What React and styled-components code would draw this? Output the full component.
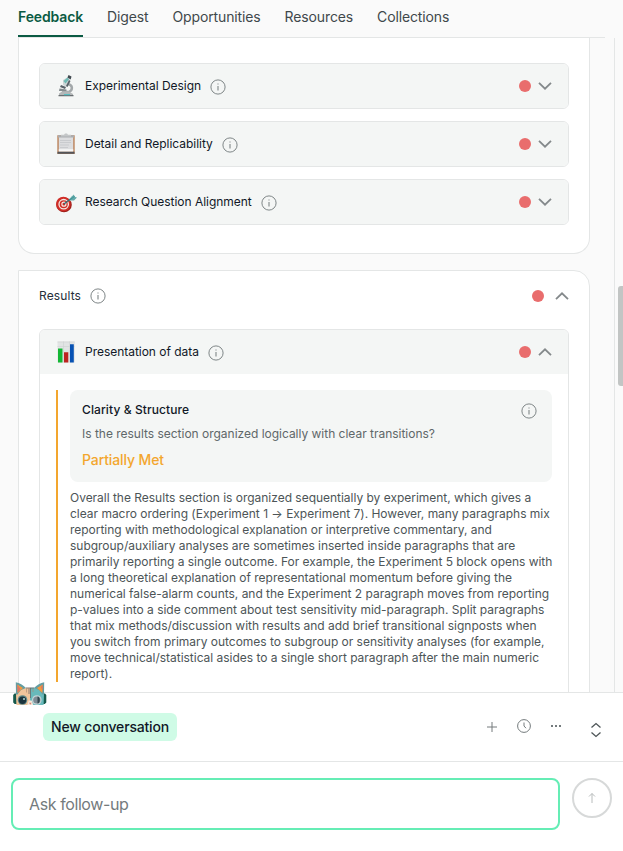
import styled, { createGlobalStyle } from 'styled-components';

const GlobalStyle = createGlobalStyle`
  * {
    box-sizing: border-box;
  }

  body {
    margin: 0;
    font-family: Inter, 'Liberation Sans', sans-serif;
    color: #111827;
    background-color: #fafafa;
  }
`;

const Container = styled.div`
  height: 851px;
  display: flex;
  flex-direction: column;
  overflow: hidden;
`;

const Tabs = styled.nav`
  height: 38px;
  flex-shrink: 0;
  margin: 0 18px;
  display: flex;
  gap: 24px;
  border-bottom: 1px solid #e4e6e6;
`;

const Tab = styled.a`
  height: 37px;
  padding-top: 7px;
  font-size: 14px;
  line-height: 20px;
  white-space: nowrap;
  letter-spacing: -0.13px;
  font-weight: ${(props) => (props.$active ? 600 : 400)};
  color: ${(props) => (props.$active ? '#0b5a43' : '#3f484b')};
  border-bottom: 2px solid ${(props) => (props.$active ? '#0b5a43' : 'transparent')};
`;

const Main = styled.main`
  flex: 1;
  min-height: 0;
  display: flex;
  justify-content: space-between;
`;

const Scroller = styled.div`
  width: 572px;
  margin-left: 18px;
  overflow: hidden;
`;

const Rail = styled.div`
  width: 9px;
  padding: 248px 0 0 3px;
  border-left: 1px solid #e4e6e6;
`;

const Thumb = styled.div`
  height: 100px;
  border-radius: 3px 0 0 3px;
  background-color: #c2c5c4;
`;

const Card = styled.section`
  padding: 0 20px;
  background-color: #fff;
  border: 1px solid #e4e6e6;
`;

const DesignCard = styled(Card)`
  padding-top: 25px;
  padding-bottom: 28px;
  border-top: none;
  border-radius: 0 0 16px 16px;
  display: flex;
  flex-direction: column;
  gap: 12px;
`;

const ResultsCard = styled(Card)`
  height: 520px;
  margin-top: 16px;
  border-radius: 0 16px 0 0;
`;

const CardHeader = styled.div`
  height: 58px;
  padding-bottom: 8px;
  display: flex;
  align-items: center;
  color: #252e3a;
`;

const Panel = styled.div`
  border: 1px solid #e4e6e6;
  border-radius: 6px;
  overflow: hidden;
`;

const PanelHeader = styled.div`
  height: 44px;
  padding: 0 16px;
  display: flex;
  align-items: center;
  background-color: #f4f6f5;
`;

const Emoji = styled.svg`
  width: 20px;
  height: 22px;
  margin-right: 9px;
  flex-shrink: 0;
`;

const Title = styled.span`
  font-size: 12px;
  line-height: 16px;
  letter-spacing: ${(props) => props.$spacing || '-0.03px'};
  margin-right: 9px;
`;

const InfoSvg = styled.svg`
  width: 16px;
  height: 16px;
  flex-shrink: 0;
  margin-top: ${(props) => props.$drop || 0}px;
  margin-right: ${(props) => props.$right || 0}px;
`;

const Dot = styled.span`
  width: 12px;
  height: 12px;
  margin-left: auto;
  margin-right: ${(props) => props.$gap || 7}px;
  border-radius: 50%;
  background-color: #e96d6d;
`;

const ChevronSvg = styled.svg`
  width: 14px;
  height: 8px;
  flex-shrink: 0;
  transform: ${(props) => (props.$up ? 'rotate(180deg)' : 'none')};
`;

const PanelBody = styled.div`
  padding: 16px;
`;

const Feedback = styled.div`
  height: 292px;
  padding-left: 12px;
  border-left: 2px solid #f3a62e;
`;

const Criterion = styled.div`
  height: 92px;
  padding: 12px;
  margin-bottom: 8px;
  border-radius: 8px;
  background-color: #f4f6f5;
  display: flex;
  justify-content: space-between;
`;

const CriterionName = styled.div`
  font-size: 12px;
  font-weight: 500;
  line-height: 16px;
  letter-spacing: 0.1px;
`;

const Question = styled.div`
  margin-top: 8px;
  font-size: 12px;
  line-height: 16px;
  letter-spacing: -0.015px;
  color: #5f6769;
`;

const Verdict = styled.div`
  margin-top: 8px;
  font-size: 14px;
  font-weight: 500;
  line-height: 20px;
  letter-spacing: -0.12px;
  color: #f3a62e;
`;

const Comment = styled.p`
  margin: 0;
  font-size: 12px;
  line-height: 16px;
  letter-spacing: -0.02px;
  white-space: pre;
  color: #4d5557;
`;

const ChatHeader = styled.div`
  position: relative;
  height: 70px;
  flex-shrink: 0;
  padding: 0 19px 0 43px;
  display: flex;
  align-items: center;
  justify-content: space-between;
  background-color: #fff;
  border-top: 1px solid #e4e6e6;
  border-bottom: 1px solid #e4e6e6;
`;

const CatSvg = styled.svg`
  position: absolute;
  left: 13px;
  top: -12px;
  width: 34px;
  height: 24px;
`;

const Conversation = styled.div`
  height: 28px;
  padding: 4px 8px;
  border-radius: 6px;
  background-color: #cffbe6;
  font-size: 14px;
  font-weight: 500;
  line-height: 20px;
  letter-spacing: -0.17px;
`;

const Actions = styled.div`
  display: flex;
  align-items: center;
  gap: 16px;
`;

const ActionSvg = styled.svg`
  width: 16px;
  height: 16px;
  fill: none;
  stroke: #747b7d;
  margin-left: ${(props) => props.$left || 0}px;
  margin-top: ${(props) => props.$drop || 0}px;
`;

const ChatForm = styled.div`
  height: 89px;
  flex-shrink: 0;
  padding: 16px 11px 0;
  display: flex;
  justify-content: space-between;
  background-color: #fff;
`;

const Input = styled.input`
  width: 549px;
  height: 52px;
  padding: 0 16px;
  border: 2px solid #65edb5;
  border-radius: 8px;
  outline: none;
  background-color: #fff;
  font-family: inherit;
  font-size: 16px;
  letter-spacing: -0.4px;

  &::placeholder {
    color: #747b7d;
    opacity: 1;
  }
`;

const Send = styled.button`
  width: 40px;
  height: 40px;
  padding: 0;
  display: flex;
  align-items: center;
  justify-content: center;
  border: 2px solid #d7d9d9;
  border-radius: 50%;
  background-color: #fff;
`;

const Info = ({ drop, right }) => (
  <InfoSvg viewBox="0 0 16 16" $drop={drop} $right={right} fill="none" stroke="#7f8687">
    <circle cx="8" cy="8" r="7.1" />
    <path d="M8 7v4.5M8 4.4v1.2" strokeWidth="1.1" />
  </InfoSvg>
);

const Chevron = ({ up }) => (
  <ChevronSvg viewBox="0 0 14 8" $up={up} fill="none" stroke="#84898b" strokeWidth="1.8">
    <path d="M1 .9L7 6.7L13 .9" />
  </ChevronSvg>
);

const Microscope = () => (
  <Emoji viewBox="0 0 20 22">
    <path d="M12 9c5 1 5 6 1 8H6" fill="none" stroke="#a3a8aa" strokeWidth="2.5" />
    <path d="M7 5l5-3 2 2-3 8-4-2z" fill="#cdd5d6" />
    <path d="M7.5 6l4-3.5 1.5 2-3.5 4z" fill="#6fbab4" />
    <path d="M11.5 2.5l1-2.5 3 1.5-.8 3z" fill="#414a50" />
    <path d="M13 5l1.5 1-3 6-1.5-1z" fill="#596168" />
    <path d="M5 10l5 2-1 2-5-2z" fill="#596168" />
    <path d="M3.5 13.5l7 1V16H3z" fill="#848b8e" />
    <path d="M3 18.5l3-2h7l4 2.5v2H3z" fill="#b3b7b8" />
    <path d="M2.5 20h15v1.2h-15z" fill="#686e71" />
    <path d="M8 19h6v1.3H8z" fill="#5bbdc0" />
  </Emoji>
);

const Clipboard = () => (
  <Emoji viewBox="0 0 20 22">
    <path d="M1.3 2.3h17.4V21H1.3z" fill="#bd8861" />
    <path d="M2.8 4h14.4v14H2.8z" fill="#dcdddf" />
    <path d="M2 2.3h16v2.2H2z" fill="#aaadb0" />
    <path d="M5 3.5V1.8h3L9 .5h2l1 1.3h3v1.7z" fill="#c4c7c8" />
    <path d="M4 7.5h11M4 9.5h11M4 12h9M4 14.5h8" stroke="#c9cbce" />
    <path d="M2.8 16.2h14.4v2.5H2.8z" fill="#f8f8f8" />
    <path d="M1.5 18.8h17v2h-17z" fill="#53565b" />
  </Emoji>
);

const Target = () => (
  <Emoji viewBox="0 0 20 22" overflow="visible">
    <ellipse cx="8" cy="13.8" rx="7.8" ry="7.4" fill="#9f211c" />
    <circle cx="7.4" cy="13" r="7.3" fill="#d02d27" />
    <circle cx="7.7" cy="13.2" r="4.7" fill="none" stroke="#f4e7e2" strokeWidth="1.3" />
    <circle cx="7.9" cy="13.2" r="2" fill="none" stroke="#f4e7e2" strokeWidth="1.2" />
    <path d="M8 13l7-5.5" stroke="#316e76" strokeWidth="1.3" />
    <path d="M13 9.5l2-3.5 3-2.5.2 2.3L21 6.5l-3 3z" fill="#62aaa9" />
    <path d="M13 9.5l6-4.5" stroke="#328a8e" strokeWidth=".8" />
  </Emoji>
);

const BarChart = () => (
  <Emoji viewBox="0 0 20 22">
    <path d="M1.5.5h17.3v21H1.5z" fill="#e1e4e4" />
    <path d="M1.5 1h17M1.5 5.5h17M7.5.5v21M13.5.5v21" stroke="#cdd1d1" strokeWidth=".6" />
    <path d="M2 7.5h4.5v14H2z" fill="#14b735" />
    <path d="M8 11.3h4.3v10.2H8z" fill="#bd2420" />
    <path d="M14 3.3h3.8v18.2H14z" fill="#0752b3" />
  </Emoji>
);

const Cat = () => (
  <CatSvg viewBox="0 0 34 24">
    <path d="M4 12.5H1.5L.2 14v7.5L1.7 23H4zM29.5 12.5H32l1.3 1.5v7.5L31.8 23h-2.3z" fill="#15594b" />
    <path d="M3 13L7 8l6-1.2h4V24H3.4z" fill="#efc49b" />
    <path d="M31 13l-4-5-6-1.2h-4V24h13.6z" fill="#68b9bb" />
    <path d="M3 13L2.8 1.2C6.5 2 10.2 4 13 7l-5 2-4 5zM31 13l.2-11.8C27.5 2 23.8 4 21 7l5 2 4 5z" fill="#649da2" />
    <path d="M4.3 3.4L10 7l-5.3 5zM29.7 3.4L24 7l5.3 5z" fill="#f39a3c" />
    <path d="M4.3 3.4L7.4 8l-2.7 4zM29.7 3.4L28 6l1.5 4z" fill="#dd7468" />
    <path d="M13 7h8M16 7.5V13M17.5 7v10" fill="none" stroke="#6d6769" strokeWidth=".8" />
    <path d="M13.5 7.5v4M20 7.5v3.5" stroke="#ad8e77" strokeWidth=".7" />
    <circle cx="9.5" cy="19" r="4.8" fill="#5d898b" />
    <circle cx="9.5" cy="19.2" r="3.7" fill="#1c353e" />
    <circle cx="23.8" cy="19" r="4.8" fill="#c6d5d8" />
    <circle cx="23.8" cy="19" r="3.6" fill="#7e8c95" />
    <path d="M24.5 15.5c3 0 3 7 0 7z" fill="#344850" />
    <circle cx="11" cy="18" r="1" fill="#b7d9d4" />
    <path d="M14.3 24l1.4-4.5h3L20.3 24z" fill="#f7e9dd" />
    <path d="M16 21.8h2.6l-1.3 1.9z" fill="#d77f70" />
  </CatSvg>
);

const tabs = [
  { name: 'Feedback', active: true },
  { name: 'Digest' },
  { name: 'Opportunities' },
  { name: 'Resources' },
  { name: 'Collections' },
];

const designRows = [
  { title: 'Experimental Design', icon: <Microscope /> },
  { title: 'Detail and Replicability', icon: <Clipboard /> },
  { title: 'Research Question Alignment', icon: <Target /> },
];

const comment = `Overall the Results section is organized sequentially by experiment, which gives a
clear macro ordering (Experiment 1 → Experiment 7). However, many paragraphs mix
reporting with methodological explanation or interpretive commentary, and
subgroup/auxiliary analyses are sometimes inserted inside paragraphs that are
primarily reporting a single outcome. For example, the Experiment 5 block opens with
a long theoretical explanation of representational momentum before giving the
numerical false-alarm counts, and the Experiment 2 paragraph moves from reporting
p-values into a side comment about test sensitivity mid-paragraph. Split paragraphs
that mix methods/discussion with results and add brief transitional signposts when
you switch from primary outcomes to subgroup or sensitivity analyses (for example,
move technical/statistical asides to a single short paragraph after the main numeric
report).`;

const Row = ({ icon, title, open }) => (
  <PanelHeader>
    {icon}
    <Title>{title}</Title>
    <Info drop={2} />
    <Dot />
    <Chevron up={open} />
  </PanelHeader>
);

const App = () => {
  return (
    <Container>
      <GlobalStyle />
      <Tabs>
        {tabs.map((tab) => (
          <Tab key={tab.name} $active={tab.active}>
            {tab.name}
          </Tab>
        ))}
      </Tabs>
      <Main>
        <Scroller>
          <DesignCard>
            {designRows.map((row) => (
              <Panel key={row.title}>
                <Row {...row} />
              </Panel>
            ))}
          </DesignCard>
          <ResultsCard>
            <CardHeader>
              <Title $spacing="0.12px">Results</Title>
              <Info />
              <Dot $gap={11} />
              <Chevron up />
            </CardHeader>
            <Panel>
              <Row icon={<BarChart />} title="Presentation of data" open />
              <PanelBody>
                <Feedback>
                  <Criterion>
                    <div>
                      <CriterionName>Clarity &amp; Structure</CriterionName>
                      <Question>Is the results section organized logically with clear transitions?</Question>
                      <Verdict>Partially Met</Verdict>
                    </div>
                    <Info drop={1} right={3} />
                  </Criterion>
                  <Comment>{comment}</Comment>
                </Feedback>
              </PanelBody>
            </Panel>
          </ResultsCard>
        </Scroller>
        <Rail>
          <Thumb />
        </Rail>
      </Main>
      <ChatHeader>
        <Cat />
        <Conversation>New conversation</Conversation>
        <Actions>
          <ActionSvg viewBox="0 0 16 16">
            <path d="M8 3v10M3 8h10" />
          </ActionSvg>
          <ActionSvg viewBox="0 0 16 16" $drop={-2}>
            <circle cx="8" cy="8" r="6.4" />
            <path d="M8 4.5V8l2 2.2" />
          </ActionSvg>
          <ActionSvg viewBox="0 0 16 16" $drop={-2}>
            <path d="M3 8h2M7 8h2M11 8h2" strokeWidth="2" />
          </ActionSvg>
          <ActionSvg viewBox="0 0 16 16" $left={8} $drop={6}>
            <path d="M3.5 5.5L8 1.5l4.5 4M3.5 10.5l4.5 4 4.5-4" stroke="#4d5557" strokeWidth="1.3" />
          </ActionSvg>
        </Actions>
      </ChatHeader>
      <ChatForm>
        <Input placeholder="Ask follow-up" />
        <Send>
          <svg width="16" height="16" viewBox="0 0 16 16" fill="none" stroke="#b8bcbc">
            <path d="M8 13V3.5M5 6.5l3-3 3 3" />
          </svg>
        </Send>
      </ChatForm>
    </Container>
  );
};

export default App;
